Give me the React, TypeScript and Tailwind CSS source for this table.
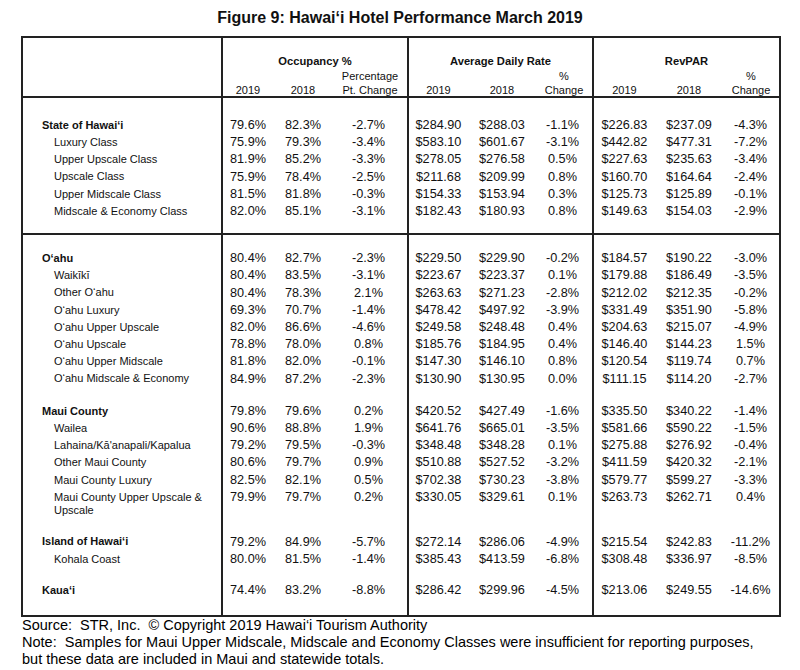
import React from "react";

type R = { label: string; v: string[]; bold?: boolean };

const GRID =
  "grid grid-cols-[198px_52px_60px_74px_61px_68px_56px_63px_68px_56px]";

const cellCls = [
  "border-l-2 border-[#222] text-center",
  "text-center",
  "text-center pr-[3px]",
  "border-l-2 border-[#222] text-center",
  "text-center",
  "text-center pr-[3px]",
  "border-l-2 border-[#222] text-center",
  "text-center",
  "text-center pr-[1px]",
];

function Row({ r }: { r: R }) {
  return (
    <div className={GRID}>
      <div
        className={
          r.bold
            ? "pl-[19px] pr-[4px] py-[1.85px] text-[11px] leading-[13.5px] font-bold"
            : "pl-[31px] pr-[4px] py-[1.85px] text-[11px] leading-[13.5px]"
        }
      >
        {r.label}
      </div>
      {r.v.map((x, i) => (
        <div
          key={i}
          className={cellCls[i] + " text-[12.7px] leading-[17.2px] whitespace-nowrap"}
        >
          {x}
        </div>
      ))}
    </div>
  );
}

function Spacer({ h }: { h: string }) {
  return (
    <div className={GRID + " " + h}>
      <div />
      {cellCls.map((c, i) => (
        <div key={i} className={c} />
      ))}
    </div>
  );
}

const state: R[] = [
  { label: "State of Hawai‘i", bold: true, v: ["79.6%", "82.3%", "-2.7%", "$284.90", "$288.03", "-1.1%", "$226.83", "$237.09", "-4.3%"] },
  { label: "Luxury Class", v: ["75.9%", "79.3%", "-3.4%", "$583.10", "$601.67", "-3.1%", "$442.82", "$477.31", "-7.2%"] },
  { label: "Upper Upscale Class", v: ["81.9%", "85.2%", "-3.3%", "$278.05", "$276.58", "0.5%", "$227.63", "$235.63", "-3.4%"] },
  { label: "Upscale Class", v: ["75.9%", "78.4%", "-2.5%", "$211.68", "$209.99", "0.8%", "$160.70", "$164.64", "-2.4%"] },
  { label: "Upper Midscale Class", v: ["81.5%", "81.8%", "-0.3%", "$154.33", "$153.94", "0.3%", "$125.73", "$125.89", "-0.1%"] },
  { label: "Midscale & Economy Class", v: ["82.0%", "85.1%", "-3.1%", "$182.43", "$180.93", "0.8%", "$149.63", "$154.03", "-2.9%"] },
];

const oahu: R[] = [
  { label: "O‘ahu", bold: true, v: ["80.4%", "82.7%", "-2.3%", "$229.50", "$229.90", "-0.2%", "$184.57", "$190.22", "-3.0%"] },
  { label: "Waikīkī", v: ["80.4%", "83.5%", "-3.1%", "$223.67", "$223.37", "0.1%", "$179.88", "$186.49", "-3.5%"] },
  { label: "Other O‘ahu", v: ["80.4%", "78.3%", "2.1%", "$263.63", "$271.23", "-2.8%", "$212.02", "$212.35", "-0.2%"] },
  { label: "O‘ahu Luxury", v: ["69.3%", "70.7%", "-1.4%", "$478.42", "$497.92", "-3.9%", "$331.49", "$351.90", "-5.8%"] },
  { label: "O‘ahu Upper Upscale", v: ["82.0%", "86.6%", "-4.6%", "$249.58", "$248.48", "0.4%", "$204.63", "$215.07", "-4.9%"] },
  { label: "O‘ahu Upscale", v: ["78.8%", "78.0%", "0.8%", "$185.76", "$184.95", "0.4%", "$146.40", "$144.23", "1.5%"] },
  { label: "O‘ahu Upper Midscale", v: ["81.8%", "82.0%", "-0.1%", "$147.30", "$146.10", "0.8%", "$120.54", "$119.74", "0.7%"] },
  { label: "O‘ahu Midscale & Economy", v: ["84.9%", "87.2%", "-2.3%", "$130.90", "$130.95", "0.0%", "$111.15", "$114.20", "-2.7%"] },
];

const maui: R[] = [
  { label: "Maui County", bold: true, v: ["79.8%", "79.6%", "0.2%", "$420.52", "$427.49", "-1.6%", "$335.50", "$340.22", "-1.4%"] },
  { label: "Wailea", v: ["90.6%", "88.8%", "1.9%", "$641.76", "$665.01", "-3.5%", "$581.66", "$590.22", "-1.5%"] },
  { label: "Lahaina/Kā'anapali/Kapalua", v: ["79.2%", "79.5%", "-0.3%", "$348.48", "$348.28", "0.1%", "$275.88", "$276.92", "-0.4%"] },
  { label: "Other Maui County", v: ["80.6%", "79.7%", "0.9%", "$510.88", "$527.52", "-3.2%", "$411.59", "$420.32", "-2.1%"] },
  { label: "Maui County Luxury", v: ["82.5%", "82.1%", "0.5%", "$702.38", "$730.23", "-3.8%", "$579.77", "$599.27", "-3.3%"] },
  { label: "Maui County Upper Upscale & Upscale", v: ["79.9%", "79.7%", "0.2%", "$330.05", "$329.61", "0.1%", "$263.73", "$262.71", "0.4%"] },
];

const big: R[] = [
  { label: "Island of Hawai‘i", bold: true, v: ["79.2%", "84.9%", "-5.7%", "$272.14", "$286.06", "-4.9%", "$215.54", "$242.83", "-11.2%"] },
  { label: "Kohala Coast", v: ["80.0%", "81.5%", "-1.4%", "$385.43", "$413.59", "-6.8%", "$308.48", "$336.97", "-8.5%"] },
];

const kauai: R[] = [
  { label: "Kaua‘i", bold: true, v: ["74.4%", "83.2%", "-8.8%", "$286.42", "$299.96", "-4.5%", "$213.06", "$249.55", "-14.6%"] },
];

function HeaderGroup({
  title,
  cols,
  sub1,
  sub2,
}: {
  title: string;
  cols: string;
  sub1: string[];
  sub2: string[];
}) {
  return (
    <div className="border-l-2 border-[#222] pt-[16px] h-full">
      <div className="text-center font-bold text-[11.2px] leading-[15px]">{title}</div>
      <div className={cols + " text-[11px] leading-[14px]"}>
        {sub1.map((s, i) => (
          <div key={"a" + i} className="text-center">
            {s}
          </div>
        ))}
        {sub2.map((s, i) => (
          <div key={"b" + i} className="text-center">
            {s}
          </div>
        ))}
      </div>
    </div>
  );
}

export default function App() {
  return (
    <div
      className="w-[800px] h-[670px] bg-white text-[#111] overflow-hidden"
      style={{ fontFamily: '"Liberation Sans", Arial, sans-serif' }}
    >
      <div className="pt-[8px] text-center font-bold text-[16px] leading-[20px]">
        Figure 9: Hawai‘i Hotel Performance March 2019
      </div>
      <div className="mt-[8px] ml-[21px] w-[760px] border-2 border-[#222]">
        <div className="flex border-b-2 border-[#222] h-[60px]">
          <div className="w-[198px]" />
          <div className="w-[186px]">
            <HeaderGroup
              title="Occupancy %"
              cols="grid grid-cols-[50px_60px_74px]"
              sub1={["", "", "Percentage"]}
              sub2={["2019", "2018", "Pt. Change"]}
            />
          </div>
          <div className="w-[185px]">
            <HeaderGroup
              title="Average Daily Rate"
              cols="grid grid-cols-[59px_68px_56px]"
              sub1={["", "", "%"]}
              sub2={["2019", "2018", "Change"]}
            />
          </div>
          <div className="w-[187px]">
            <HeaderGroup
              title="RevPAR"
              cols="grid grid-cols-[61px_68px_56px]"
              sub1={["", "", "%"]}
              sub2={["2019", "2018", "Change"]}
            />
          </div>
        </div>
        <div>
          <Spacer h="h-[19px]" />
          {state.map((r) => (
            <Row key={r.label} r={r} />
          ))}
          <Spacer h="h-[13px]" />
        </div>
        <div className="border-t-2 border-[#222]">
          <Spacer h="h-[15px]" />
          {oahu.map((r) => (
            <Row key={r.label} r={r} />
          ))}
          <Spacer h="h-[15px]" />
          {maui.map((r) => (
            <Row key={r.label} r={r} />
          ))}
          <Spacer h="h-[14px]" />
          {big.map((r) => (
            <Row key={r.label} r={r} />
          ))}
          <Spacer h="h-[14px]" />
          {kauai.map((r) => (
            <Row key={r.label} r={r} />
          ))}
          <Spacer h="h-[16px]" />
        </div>
      </div>
      <div className="pl-[22px] text-[14.5px] leading-[16.7px] whitespace-pre text-black">
        <div>{"Source:  STR, Inc.  © Copyright 2019 Hawai‘i Tourism Authority"}</div>
        <div>
          {"Note:  Samples for Maui Upper Midscale, Midscale and Economy Classes were insufficient for reporting purposes,"}
        </div>
        <div>{"but these data are included in Maui and statewide totals."}</div>
      </div>
    </div>
  );
}
